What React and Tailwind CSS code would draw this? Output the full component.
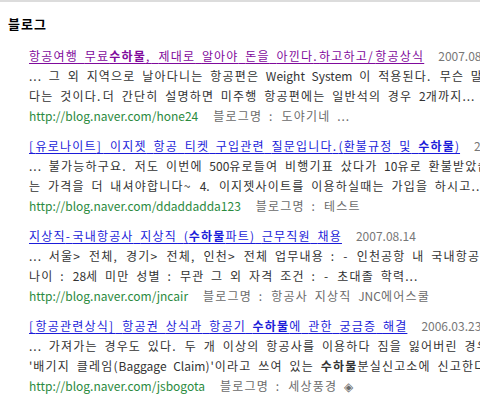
const results = [
  {
    title: ["항공여행 무료", "수하물", ", 제대로 알아야 돈을 아낀다.하고하고/항공상식"],
    visited: true,
    date: "2007.08.14",
    lines: [
      ["... 그 외 지역으로 날아다니는 항공편은 Weight System 이 적용된다. 무슨 말이냐면"],
      ["다는 것이다.더 간단히 설명하면 미주행 항공편에는 일반석의 경우 2개까지..."],
    ],
    url: "http://blog.naver.com/hone24",
    blog: "도야기네 ...",
  },
  {
    title: ["[유로나이트] 이지젯 항공 티켓 구입관련 질문입니다.(환불규정 및 ", "수하물", ")"],
    date: "2007.08.13",
    lines: [
      ["... 불가능하구요. 저도 이번에 500유로들여 비행기표 샀다가 10유로 환불받았습니다"],
      ["는 가격을 더 내셔야합니다~ 4. 이지젯사이트를 이용하실때는 가입을 하시고..."],
    ],
    url: "http://blog.naver.com/ddaddadda123",
    blog: "테스트",
  },
  {
    title: ["지상직-국내항공사 지상직 (", "수하물", "파트) 근무직원 채용"],
    date: "2007.08.14",
    lines: [
      ["... 서울> 전체, 경기> 전체, 인천> 전체 업무내용 : - 인천공항 내 국내항공사 오퍼레이션"],
      ["나이 : 28세 미만 성별 : 무관 그 외 자격 조건 : - 초대졸 학력..."],
    ],
    url: "http://blog.naver.com/jncair",
    blog: "항공사 지상직 JNC에어스쿨",
  },
  {
    title: ["[항공관련상식] 항공권 상식과 항공기 ", "수하물", "에 관한 궁금증 해결"],
    date: "2006.03.23",
    lines: [
      ["... 가져가는 경우도 있다. 두 개 이상의 항공사를 이용하다 짐을 잃어버린 경우, 도착"],
      ["'배기지 클레임(Baggage Claim)'이라고 쓰여 있는 ", "수하물", "분실신고소에 신고한다"],
    ],
    url: "http://blog.naver.com/jsbogota",
    blog: "세상풍경 ◈",
  },
];

// the old gulim font has full-width hangul and wider punctuation,
// so widen those runs a little
const Ko = ({ text }) =>
  text.split(/([\uAC00-\uD7A3]+|\.{2,}|[()']|[.,/[\]:~<>\-])/).map((s, i) => {
    if (!s) return null;
    if (/[\uAC00-\uD7A3]/.test(s))
      return (
        <span key={i} className="tracking-[1.2px]">
          {s}
        </span>
      );
    if (/^(\.{2,}|[()'])$/.test(s))
      return (
        <span key={i} className="tracking-[1px]">
          {s}
        </span>
      );
    if (/^[.,/[\]:~<>\-]$/.test(s))
      return (
        <span key={i} className="tracking-[2.5px]">
          {s}
        </span>
      );
    return <span key={i}>{s}</span>;
  });

// every odd piece is the highlighted keyword
const Hl = ({ parts }) =>
  parts.map((p, i) =>
    i % 2 === 1 ? (
      <b key={i} className="font-bold">
        <Ko text={p} />
      </b>
    ) : (
      <Ko key={i} text={p} />
    )
  );

export default function App() {
  return (
    <div
      className="w-[480px] h-[411px] overflow-hidden bg-white border-t-2 border-[#dcdcdc] text-[12px] whitespace-nowrap [word-spacing:4px]"
      style={{ fontFamily: '"Noto Sans CJK KR", "Noto Sans", sans-serif' }}
    >
      <h2 className="pl-[8px] pt-[14px] text-[13px] leading-[16px] font-bold text-black tracking-[1px]">블로그</h2>

      <ul className="mt-[14px] pl-[29px] flex flex-col gap-[10px]">
        {results.map((r, i) => (
          <li key={i} className="flex flex-col">
            <div className="h-[20px] leading-[20px] flex items-start">
              <a
                href="#"
                className={`underline underline-offset-[2px] ${r.visited ? "text-[#7f0a9c]" : "text-[#1c1cd9]"}`}
              >
                <Hl parts={r.title} />
              </a>
              <span className="ml-[14px] text-[#777] [word-spacing:0]">{r.date}</span>
            </div>
            {r.lines.map((l, j) => (
              <p key={j} className="h-[20px] leading-[20px] text-[#333]">
                <Hl parts={l} />
              </p>
            ))}
            <div className="h-[20px] leading-[20px]">
              <span className="text-[#2b8a3e]">{r.url}</span>
              <span className="ml-[15px] text-[#6b6b6b]">
                <Ko text={"블로그명 : " + r.blog} />
              </span>
            </div>
          </li>
        ))}
      </ul>
    </div>
  );
}
